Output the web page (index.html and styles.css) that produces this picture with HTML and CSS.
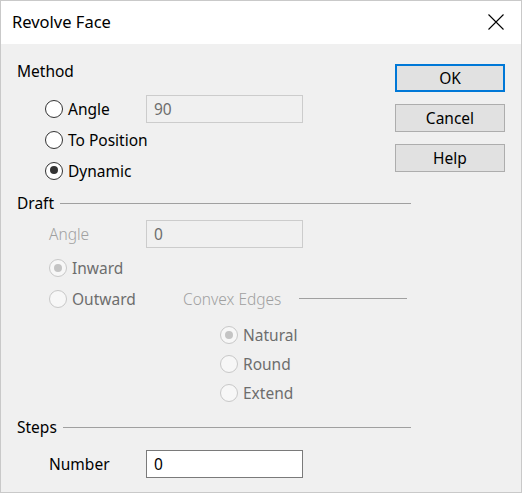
FILE: index.html
```html
<!DOCTYPE html>
<html>
<head>
    <title>Revolve Face</title>
    <link rel="stylesheet" href="styles.css">
</head>
<body>
    <div class="window">
        <div class="titlebar">
            <span class="title">Revolve Face</span>
            <svg class="close" width="16" height="16" viewBox="0 0 16 16">
                <path d="M0.5 0.5 L15.5 15.5 M15.5 0.5 L0.5 15.5" stroke="#000" stroke-width="1.1" fill="none"/>
            </svg>
        </div>

        <div class="content">
            <div class="left">
                <div class="group-head method-head"><span>Method</span></div>

                <div class="radio-row indent">
                    <label class="radio"><span class="dot"></span>Angle</label>
                    <div class="field disabled">90</div>
                </div>
                <div class="radio-row indent">
                    <label class="radio"><span class="dot"></span>To Position</label>
                </div>
                <div class="radio-row indent">
                    <label class="radio"><span class="dot checked"></span>Dynamic</label>
                </div>

                <div class="group-head draft-head"><span>Draft</span><span class="line"></span></div>

                <div class="field-row draft-angle">
                    <span class="faint label-col">Angle</span>
                    <div class="field disabled">0</div>
                </div>
                <div class="radio-row inward off">
                    <label class="radio"><span class="dot checked"></span>Inward</label>
                </div>
                <div class="radio-row off">
                    <label class="radio outward"><span class="dot"></span>Outward</label>
                    <span class="faint">Convex Edges</span>
                    <span class="line sub-line"></span>
                </div>

                <div class="edges off">
                    <div class="edge-row"><label class="radio"><span class="dot checked"></span>Natural</label></div>
                    <div class="edge-row"><label class="radio"><span class="dot"></span>Round</label></div>
                    <div class="edge-row"><label class="radio"><span class="dot"></span>Extend</label></div>
                </div>

                <div class="group-head steps-head"><span>Steps</span><span class="line"></span></div>

                <div class="field-row number-row">
                    <span class="label-col">Number</span>
                    <div class="field">0</div>
                </div>
            </div>

            <div class="buttons">
                <button class="btn default">OK</button>
                <button class="btn">Cancel</button>
                <button class="btn">Help</button>
            </div>
        </div>
    </div>
</body>
</html>
```

FILE: styles.css
```css
body {
    margin: 0;
    font-family: "Noto Sans", "Open Sans", sans-serif;
    font-size: 15.5px;
    color: #000;
}

.window {
    width: 522px;
    height: 493px;
    box-sizing: border-box;
    border: 1px solid #c9c9c9;
    background-color: #f0f0f0;
}

.titlebar {
    height: 43px;
    background-color: #fff;
    display: flex;
    align-items: center;
    padding: 0 17px 0 11px;
}

.title {
    font-size: 16.5px;
    flex: 1;
    padding-bottom: 2px;
}

.close {
    margin-bottom: 2px;
}

.content {
    display: flex;
    padding-left: 16px;
}

.left {
    flex: none;
    width: 394px;
}

.group-head {
    height: 22px;
    display: flex;
    align-items: center;
}

.method-head {
    margin-top: 16px;
}

.draft-head {
    margin-top: 6px;
}

.steps-head {
    margin-top: 9px;
}

.line {
    flex: 1;
    height: 1px;
    background-color: #a0a0a0;
    margin-left: 6px;
}

.radio-row {
    height: 31px;
    display: flex;
    align-items: center;
}

.indent {
    padding-left: 28px;
}

.method-head + .indent {
    margin-top: 11px;
}

.radio {
    display: flex;
    align-items: center;
    width: 101px;
    white-space: nowrap;
}

.dot {
    flex: none;
    width: 18px;
    height: 18px;
    box-sizing: border-box;
    border: 1.5px solid #333;
    border-radius: 50%;
    background-color: #fff;
    margin-right: 5px;
    position: relative;
}

.dot.checked::after {
    content: "";
    position: absolute;
    left: 3.5px;
    top: 3.5px;
    width: 8px;
    height: 8px;
    border-radius: 50%;
    background-color: #333;
}

.field {
    width: 157px;
    height: 28px;
    box-sizing: border-box;
    border: 1px solid #7a7a7a;
    background-color: #fff;
    padding-left: 7px;
    display: flex;
    align-items: center;
}

.field.disabled {
    border-color: #cccccc;
    background-color: #f0f0f0;
    color: #6d6d6d;
}

.field-row {
    height: 28px;
    display: flex;
    align-items: center;
    padding-left: 32px;
}

.label-col {
    width: 97px;
}

.draft-angle {
    margin-top: 6px;
}

.faint {
    color: #a0a0a0;
    font-weight: 300;
}

.inward {
    margin-top: 4px;
}

.off {
    padding-left: 32px;
    color: #6d6d6d;
}

.off .dot {
    border-color: #c8c8c8;
    border-width: 1px;
    background-color: #f7f7f7;
}

.off .dot.checked::after {
    left: 4px;
    top: 4px;
    background-color: #c4c4c4;
}

.outward {
    width: 134px;
}

.sub-line {
    margin-left: 18px;
    margin-right: 4px;
}

.edges {
    margin-top: 6px;
    padding-left: 203px;
}

.edge-row {
    height: 29px;
    display: flex;
    align-items: center;
}

.number-row {
    margin-top: 12px;
}

.buttons {
    margin-left: -16px;
    padding-top: 20px;
    display: flex;
    flex-direction: column;
    gap: 12px;
}

.btn {
    width: 110px;
    height: 28px;
    box-sizing: border-box;
    border: 1px solid #adadad;
    background-color: #e1e1e1;
    font-family: "Noto Sans", "Open Sans", sans-serif;
    font-size: 15.5px;
    color: #000;
    padding: 0;
}

.btn.default {
    border: 2px solid #0078d7;
}
```
